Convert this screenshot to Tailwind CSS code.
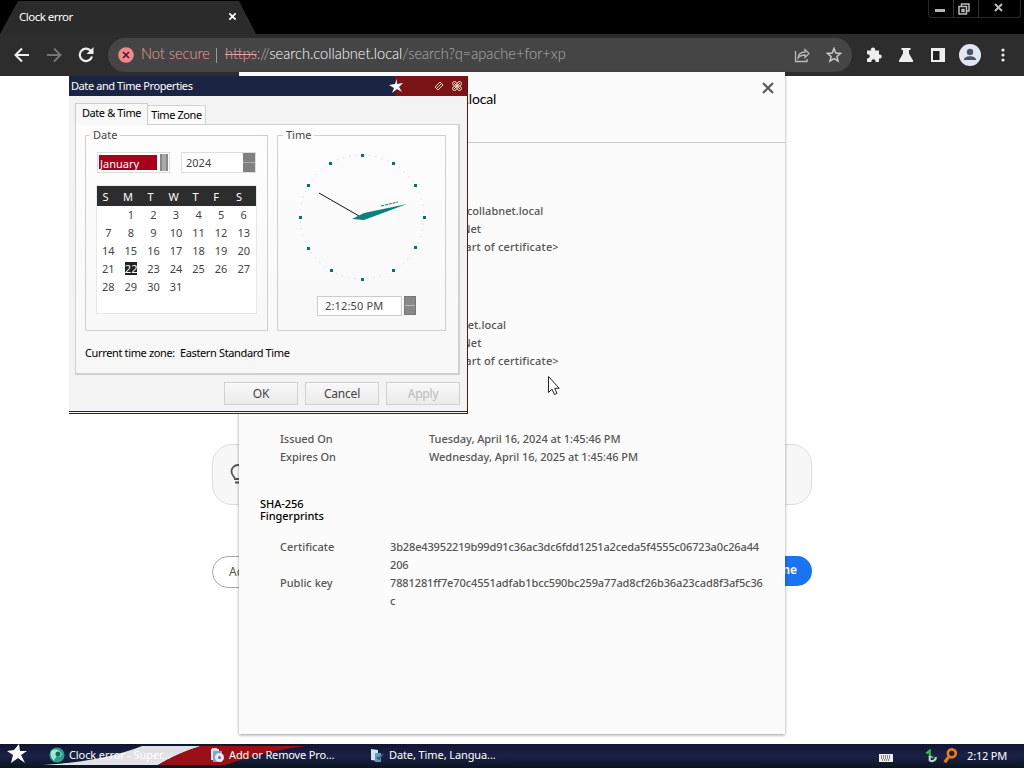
<!DOCTYPE html>
<html lang="en">
<head>
    <meta charset="UTF-8">
    <meta name="viewport" content="width=device-width, initial-scale=1.0">
    <title>Clock error</title>
    <script src="https://cdn.jsdelivr.net/npm/@tailwindcss/browser@4"></script>
</head>
<body class="relative w-[1024px] h-[768px] overflow-hidden bg-white flex flex-col font-['Noto_Sans',sans-serif] text-[11px]">

    <!-- Browser tab strip -->
    <div class="h-[34px] bg-black flex justify-between shrink-0">
        <div class="w-[256px] bg-[#2b2b2b] mt-px flex items-center justify-between pl-[19px] pr-[19px] text-white [clip-path:polygon(18px_0,239px_0,256px_100%,0_100%)]">
            <span class="text-[11.5px] tracking-[-0.5px] -mt-0.5">Clock error</span>
            <svg class="w-[9px] h-[9px] -mt-0.5" viewBox="0 0 10 10" stroke="#fff" stroke-width="2"><path d="M1.5 1.5l7 7M8.5 1.5l-7 7"/></svg>
        </div>
        <div class="flex h-[18px] w-[93px] mr-[3px] border border-t-0 border-[#292929] rounded-b-sm">
            <div class="w-[25px] border-r border-[#333] flex justify-center items-center"><span class="w-[10px] h-[3px] bg-[#b5b5b5] mt-[3px] -ml-0.5"></span></div>
            <div class="w-[25px] border-r border-[#333] flex justify-center items-center">
                <svg class="w-[12px] h-[12px] -ml-1" viewBox="0 0 12 12" fill="none" stroke="#bbb" stroke-width="1.5"><path d="M3.5 3V1h7.500v7H9"/><path d="M1 3.500h7.500V11H1z"/><path d="M4 6.500h2v2H4z"/></svg>
            </div>
            <div class="flex-1 flex justify-center items-center">
                <svg class="w-[9px] h-[9px] -ml-0.5 -mt-0.5" viewBox="0 0 9 9" stroke="#bbb" stroke-width="2"><path d="M1 1l7 7M8 1L1 8"/></svg>
            </div>
        </div>
    </div>

    <!-- Toolbar -->
    <div class="h-[42px] bg-[#2d2d2d] flex items-center shrink-0 pl-[14px] text-white">
        <svg class="w-[16px] h-[16px]" viewBox="0 0 16 16" fill="none" stroke="#eee" stroke-width="2"><path d="M15 8H2M8 1.500L1.500 8 8 14.500"/></svg>
        <svg class="w-[16px] h-[16px] ml-[16px]" viewBox="0 0 16 16" fill="none" stroke="#777" stroke-width="1.800"><path d="M1 8h13M8 1.500L14.500 8 8 14.500"/></svg>
        <svg class="w-[16px] h-[16px] ml-[16px]" viewBox="0 0 16 16"><path d="M13.200 4.500A6.200 6.200 0 1 0 14 9.500" fill="none" stroke="#eee" stroke-width="2.200"/><path d="M15.500 0v7H8.500z" fill="#eee"/></svg>
        <div class="w-[744px] h-[34px] ml-[14px] rounded-full bg-[#454545] flex items-center pl-[10px] pr-[10px] font-['Lato',sans-serif] font-light text-[14.6px] whitespace-nowrap">
            <svg class="w-[16px] h-[16px] shrink-0" viewBox="0 0 16 16"><circle cx="8" cy="8" r="7.800" fill="#f08a8a"/><path d="M5 5l6 6M11 5l-6 6" stroke="#513" stroke-width="1.600"/></svg>
            <span class="ml-[7px] w-[67px] -mt-0.5 text-[#f0a0a0]">Not secure</span>
            <span class="w-px h-[15px] ml-[8px] bg-[#999]"></span>
            <span class="ml-[8px] -mt-0.5"><span class="text-[#f0a0a0] line-through">https</span><span class="text-[#bbb]">://</span>search.collabnet.local<span class="text-[#b0b0b0]">/search?q=apache+for+xp</span></span>
            <svg class="w-[16px] h-[16px] ml-auto" viewBox="0 0 16 16" fill="none" stroke="#bbb" stroke-width="1.300"><path d="M1.500 4v10.500h11.500V12M4 11c.5-4 3-6 7-6V2.500l4 4-4 4V8C8 8 6 8.500 4 11z"/></svg>
            <svg class="w-[16px] h-[16px] ml-[16px]" viewBox="0 0 16 16" fill="none" stroke="#c8c8c8" stroke-width="1.500"><path d="M8 1.500l1.800 4.500 4.800.4-3.700 3.100 1.200 4.700L8 11.700l-4.100 2.500 1.200-4.700L1.400 6.400 6.200 6z"/></svg>
        </div>
        <svg class="w-[16px] h-[16px] ml-[14px]" viewBox="0 0 16 16" fill="#eee"><path d="M1 3.500h4a2.200 2.200 0 1 1 4 0h4v4a2.100 2.100 0 1 1 0 4V15H9.500a2.100 2.100 0 1 0-4 0H1v-3.700a2.100 2.100 0 1 0 0-4z"/></svg>
        <svg class="w-[16px] h-[16px] ml-[16px]" viewBox="0 0 16 16" fill="#eee"><path d="M3.500 1h9v2H11v3.500l4 7c.4.800 0 1.500-.8 1.500H1.800c-.8 0-1.200-.7-.8-1.500l4-7V3H3.500z"/></svg>
        <svg class="w-[14px] h-[14px] ml-[17px]" viewBox="0 0 14 14"><path d="M0 0h14v14H0z" fill="#eee"/><path d="M2 3h6.500v9H2z" fill="#222"/></svg>
        <svg class="w-[22px] h-[22px] ml-[14px]" viewBox="0 0 22 22"><circle cx="11" cy="11" r="11" fill="#e2e6f2"/><circle cx="11" cy="8" r="3.200" fill="#4a5468"/><path d="M4.800 16c0-2.500 3-3.800 6.200-3.800s6.200 1.300 6.200 3.800z" fill="#4a5468"/></svg>
        <svg class="w-[4px] h-[14px] ml-[20px]" viewBox="0 0 4 14" fill="#eee"><circle cx="2" cy="2" r="1.600"/><circle cx="2" cy="7" r="1.600"/><circle cx="2" cy="12" r="1.600"/></svg>
    </div>

    <!-- Error page behind the dialogs -->
    <main class="flex-1 w-[600px] ml-[212px] pt-[368px]">
        <div class="h-[61px] rounded-[20px] border border-[#dcdcdc] bg-[#f7f7f7] flex items-center pl-[17px]">
            <svg class="w-[16px] h-[21px]" viewBox="0 0 16 21" fill="none" stroke="#555" stroke-width="1.800"><path d="M5 15c0-2-3.500-3.500-3.500-7.500a6.500 6.500 0 0 1 13 0C14.500 11.500 11 13 11 15zM5 18.500h6"/></svg>
        </div>
        <div class="flex justify-between mt-[51px]">
            <div class="h-[32px] w-[100px] rounded-full border border-[#aaa] text-[#555] text-[12px] leading-[29px] pl-[16px]">Advanced</div>
            <div class="h-[30px] w-[120px] rounded-full bg-[#1a73f0] text-white font-semibold text-[12px] leading-[28px] text-right pr-[15px]">Refresh time</div>
        </div>
    </main>

    <!-- Taskbar -->
    <footer class="relative h-[24px] shrink-0 bg-linear-to-b from-[#10152f] via-[#1b2148] to-[#0b1420] flex items-center text-white text-[11px]">
        <svg class="absolute left-0 top-0 w-[340px] h-[24px]" viewBox="0 0 340 24"><path d="M43 21Q105 17 142 2h59Q178 9 158 21z" fill="#e2e2e6"/><path d="M158 21Q178 9 201 2h105Q270 6 225 21z" fill="#9b1018"/></svg>
        <svg class="relative w-[20px] h-[20px] ml-[7px] -mt-1" viewBox="0 0 20 20" fill="#fff"><path d="M12 0l1 7 7 0-6 4 4 8-7-5-7 5 2-8-6-4 7-1z"/></svg>
        <svg class="relative w-[16px] h-[16px] ml-[22px] -mt-0.5" viewBox="0 0 16 16"><circle cx="8" cy="8" r="7.500" fill="#28a08c"/><path d="M2 4q6-4 11 3-1 4-5 2-4 5-3 5 2 1 2 1-7-4-5-11z" fill="#9ce8d0"/><circle cx="9" cy="7" r="2.500" fill="#087060"/></svg>
        <span class="relative ml-[4px] w-[141px] -mt-px tracking-[-0.1px]">Clock error - Super...</span>
        <svg class="relative w-[15px] h-[16px] -mt-0.5" viewBox="0 0 15 16"><path d="M1 2h8v11H1z" fill="#d7e8f5"/><path d="M3 4h9v11H3z" fill="#7ca8c8"/><circle cx="9.500" cy="10.500" r="4.500" fill="#e5e9f8"/><circle cx="9.500" cy="10.500" r="1.500" fill="#6670a0"/><path d="M2 1h5v3H2z" fill="#ddd"/></svg>
        <span class="relative ml-[4px] w-[141px] -mt-px tracking-[-0.15px]">Add or Remove Pro...</span>
        <svg class="w-[14px] h-[15px] -mt-0.5" viewBox="0 0 14 15"><path d="M1 1l7 1v11l-7-1z" fill="#cde8f8"/><path d="M5 5h6v9H5z" fill="#6b9ac0"/><path d="M7 9l2 2 4-5" stroke="#345a87" stroke-width="2" fill="none"/></svg>
        <span class="ml-[5px] -mt-px tracking-[-0.1px]">Date, Time, Langua...</span>
        <svg class="w-[14px] h-[8px] ml-auto mt-1" viewBox="0 0 14 8"><path d="M0 0h14v8H0z" fill="#eee"/><path d="M2 2h10M2 4h10M3 6h8" stroke="#222" stroke-dasharray="1 1"/></svg>
        <svg class="w-[13px] h-[14px] ml-[32px]" viewBox="0 0 14 16" fill="none" stroke-width="2.500"><path d="M1 5l4-3v6l4 2" stroke="#3cba43"/><path d="M5 8v5c3 2 7 0 7-4" stroke="#c4d2cc"/></svg>
        <svg class="w-[15px] h-[16px] ml-[5px]" viewBox="0 0 16 18" fill="none" stroke="#f27a18"><circle cx="9.500" cy="6" r="4.500" stroke-width="3"/><path d="M6 10l-4.500 6" stroke-width="3.500"/></svg>
        <span class="ml-[9px] mr-[17px] tracking-[-0.2px]">2:12 PM</span>
    </footer>

    <!-- Certificate viewer -->
    <section class="absolute left-[239px] top-[72px] w-[546px] h-[662px] bg-[#fbfbfb] shadow-[0_1px_3px_rgba(0,0,0,0.4)] text-[#555] text-[11px] font-medium leading-[18px]">
        <header class="h-[71px] border-b border-[#c8c8c8] flex justify-between pt-[10px] pr-[11px]">
            <h2 class="w-[257px] text-right text-[14px] font-normal tracking-[-0.2px] font-['Lato',sans-serif] text-black leading-[34px]">search.collabnet.local</h2>
            <svg class="w-[12px] h-[12px]" viewBox="0 0 12 12" stroke="#555" stroke-width="2"><path d="M1 1l10 10M11 1L1 11"/></svg>
        </header>
        <div class="pl-[190px] pt-[59px] tracking-[0.03px]">
            <p>search.collabnet.local</p>
            <p>CollabNet</p>
            <p class="tracking-[0.16px]">&lt;Not Part of certificate&gt;</p>
        </div>
        <div class="pl-[190px] pt-[60px] tracking-[0.08px]">
            <p>collabnet.local</p>
            <p>CollabNet</p>
            <p class="tracking-[0.16px]">&lt;Not Part of certificate&gt;</p>
        </div>
        <dl class="grid grid-cols-[149px_1fr] pl-[41px] pt-[60px] tracking-[-0.04px]">
            <dt>Issued On</dt><dd>Tuesday, April 16, 2024 at 1:45:46 PM</dd>
            <dt>Expires On</dt><dd>Wednesday, April 16, 2025 at 1:45:46 PM</dd>
        </dl>
        <h3 class="pl-[21px] pt-[32px] leading-[12px] text-black tracking-[-0.05px]">SHA-256<br>Fingerprints</h3>
        <dl class="grid grid-cols-[110px_1fr] pl-[41px] pt-[16px]">
            <dt>Certificate</dt><dd class="tracking-[-0.14px]">3b28e43952219b99d91c36ac3dc6fdd1251a2ceda5f4555c06723a0c26a44<br>206</dd>
            <dt>Public key</dt><dd class="tracking-[-0.11px]">7881281ff7e70c4551adfab1bcc590bc259a77ad8cf26b36a23cad8f3af5c36<br>c</dd>
        </dl>
    </section>

    <!-- Date and Time Properties -->
    <section class="absolute left-[69px] top-[76px] w-[399px] h-[338px] bg-[#f3f3f3] border-r border-b border-[#601416] text-black flex flex-col">
        <header class="h-[20px] shrink-0 flex items-center bg-linear-to-r from-[#1b2443] from-82% to-[#7b1416] to-82% text-white pl-[2px] pr-[5px]">
            <span class="w-[318px] tracking-[-0.42px]">Date and Time Properties</span>
            <svg class="w-[14px] h-[14px]" viewBox="0 0 14 14" fill="#fff"><path d="M8 0v5l6-1-4 4 3 5-5-3-5 4 2-5-5-3 6-1z"/></svg>
            <svg class="w-[10px] h-[10px] ml-auto" viewBox="0 0 10 10" fill="none" stroke="#e8dcb8"><path d="M1 6l5-5 3 3-5 5zM3 7l4-4"/></svg>
            <svg class="w-[10px] h-[10px] ml-[8px]" viewBox="0 0 10 10" fill="none" stroke="#e8dcb8"><circle cx="2.500" cy="2.500" r="2"/><circle cx="7.500" cy="2.500" r="2"/><circle cx="2.500" cy="7.500" r="2"/><circle cx="7.500" cy="7.500" r="2"/><path d="M2 2l6 6M8 2L2 8"/></svg>
        </header>
        <div class="flex items-end pl-[6px] h-[28px] shrink-0 tracking-[-0.4px]">
            <div class="relative z-10 w-[73px] h-[22px] -mb-px bg-[#f8f8f8] border border-b-0 border-[#ccc] text-center leading-[18px]">Date &amp; Time</div>
            <div class="w-[58px] h-[19px] bg-[#fafafa] border border-b-0 border-l-0 border-[#d5d5d5] text-center leading-[18px]">Time Zone</div>
        </div>
        <div class="ml-[6px] w-[385px] h-[251px] shrink-0 bg-linear-to-b from-[#fdfdfd] to-[#f7f7f7] border border-r-2 border-b-2 border-[#d0d0d0]">
            <div class="flex gap-[10px] pl-[9px] pt-[2px] text-[#444]">
                <fieldset class="w-[183px] h-[204px] border border-[#d0d0d0] pl-[10px]">
                    <legend class="ml-[-6px] px-[3px] leading-[16px]">Date</legend>
                    <div class="flex gap-[11px] mt-[9px] pl-px">
                        <div class="w-[73px] h-[21px] flex bg-white border border-[#ddd] p-px">
                            <span class="w-[58px] bg-[#a8001c] text-white leading-[18px] pl-px my-px">January</span>
                            <span class="w-[8px] ml-auto bg-[#aaa] border-x-2 border-[#888]"></span>
                        </div>
                        <div class="w-[75px] h-[21px] flex justify-between bg-white border border-[#ddd] pl-[4px] leading-[19px]">2024
                            <span class="w-[12px] flex flex-col gap-px bg-[#aaa]"><i class="flex-1 bg-[#808080]"></i><i class="flex-1 bg-[#808080]"></i></span>
                        </div>
                    </div>
                    <div class="w-[161px] h-[129px] mt-[12px] bg-white border border-[#e8e8e8]">
                        <div class="grid grid-cols-[17px_28px_17px_29px_15px_26px_20px] justify-start h-[20px] leading-[21px] bg-[#2d2d2d] text-white text-center">
                            <b class="font-normal">S</b><b class="font-normal">M</b><b class="font-normal">T</b><b class="font-normal">W</b><b class="font-normal">T</b><b class="font-normal">F</b><b class="font-normal">S</b>
                        </div>
                        <div id="days" class="grid grid-cols-7 text-center leading-[18px] w-[158px]"></div>
                    </div>
                </fieldset>
                <fieldset class="w-[169px] h-[204px] -ml-px border border-[#d0d0d0] flex flex-col items-center">
                    <legend class="ml-[5px] px-[3px] leading-[16px]">Time</legend>
                    <svg class="w-[140px] h-[140px] mt-[4px]" viewBox="0 0 140 140">
                        <circle cx="70" cy="70" r="62" fill="none" stroke="#a8dede" stroke-width="1" stroke-dasharray="1 5.493"/>
                        <g id="ticks" fill="#087070"></g>
                        <path d="M27 46l40 23" stroke="#111"/>
                        <path d="M60 72l12-6 43-9-43 16z" fill="#0b817d"/>
                        <path d="M89 59l17-4" stroke="#087070" stroke-dasharray="3 1"/>
                    </svg>
                    <div class="flex mt-[9px] gap-[2px] ml-[10px]">
                        <span class="w-[85px] h-[20px] bg-white border border-[#ccc] leading-[18px] pl-[7px] tracking-[0.15px]">2:12:50 PM</span>
                        <span class="w-[12px] h-[19px] flex flex-col gap-px bg-[#bbb] border border-[#777]"><i class="flex-1 bg-[#888]"></i><i class="flex-1 bg-[#888]"></i></span>
                    </div>
                </fieldset>
            </div>
            <p class="mt-[14px] ml-[9px] leading-[16px] whitespace-pre tracking-[-0.36px]">Current time zone:  Eastern Standard Time</p>
        </div>
        <div class="flex justify-end gap-[7px] pr-[7px] pt-[7px] text-[12px] text-[#444] text-center leading-[21px] tracking-[-0.2px]">
            <div class="w-[74px] h-[23px] bg-linear-to-b from-[#f8f8f8] to-[#ebebeb] border border-[#d0d0d0]">OK</div>
            <div class="w-[74px] h-[23px] bg-linear-to-b from-[#f8f8f8] to-[#ebebeb] border border-[#d0d0d0]">Cancel</div>
            <div class="w-[74px] h-[23px] bg-linear-to-b from-[#f8f8f8] to-[#ebebeb] border border-[#d0d0d0] text-[#bbb]">Apply</div>
        </div>
        <div class="absolute left-0 bottom-px w-full h-px bg-[#601416]"></div>
    </section>

    <!-- Mouse pointer -->
    <svg class="absolute left-[547px] top-[375px] w-[14px] h-[21px]" viewBox="0 0 14 21"><path d="M1.500 1.500v16l3.500-3.300 2.500 5.300 2.500-1.200-2.300-5h4.500z" fill="#fff" stroke="#222"/></svg>

    <script>
        const days = document.getElementById('days');
        // January 2024 starts on a Monday
        days.innerHTML = '<span></span>';
        for (let d = 1; d <= 31; d++) {
            const cls = d === 22 ? 'bg-[#222] text-white w-[12px] h-[13px] leading-[13px] mx-auto mt-[2px]' : '';
            days.innerHTML += `<span class="${cls}">${d}</span>`;
        }

        let ticks = '';
        for (let i = 0; i < 12; i++) {
            const a = i * Math.PI / 6;
            ticks += `<rect x="${Math.round(68.5 + 62 * Math.sin(a))}" y="${Math.round(68.5 - 62 * Math.cos(a))}" width="3" height="3"/>`;
        }
        document.getElementById('ticks').innerHTML = ticks;
    </script>
</body>
</html>
